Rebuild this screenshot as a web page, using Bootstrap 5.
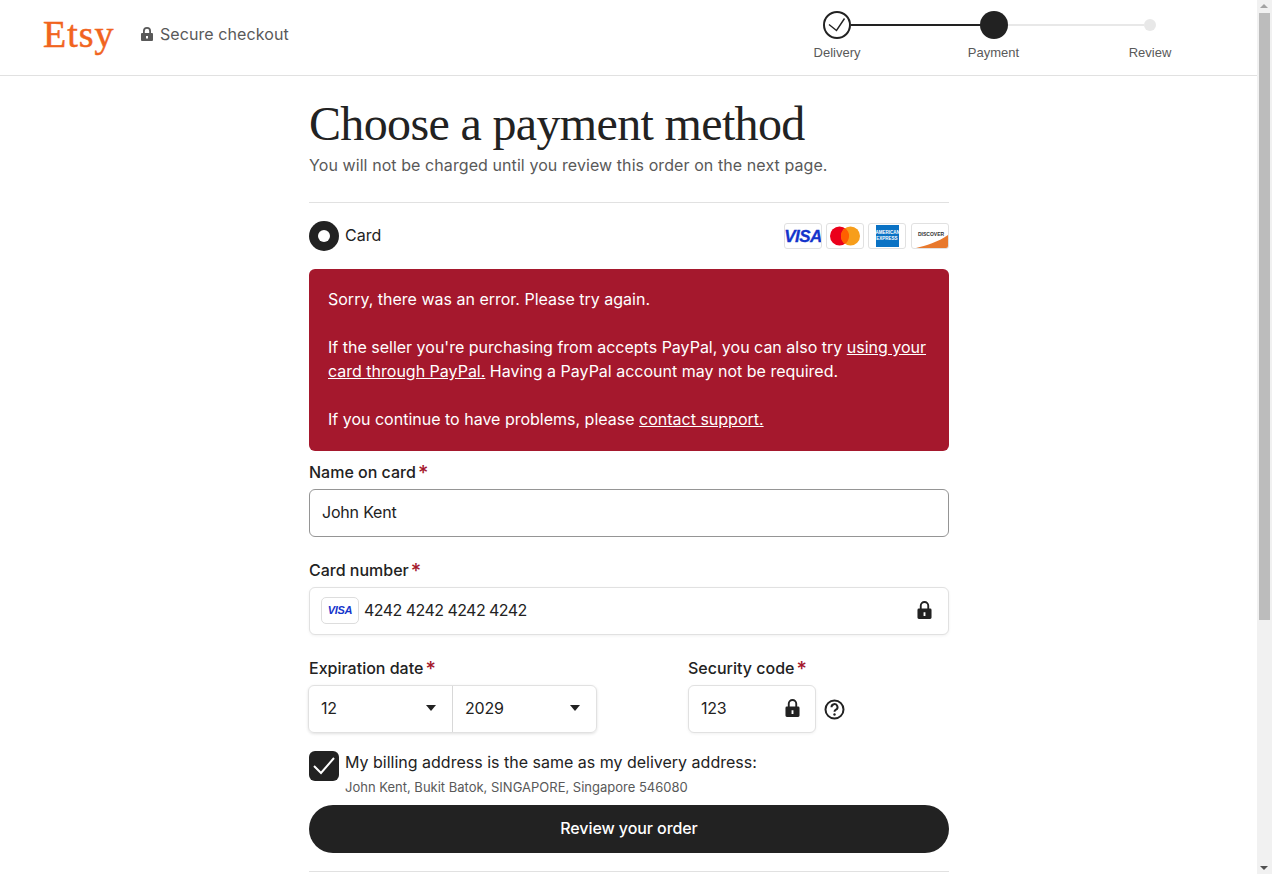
<!DOCTYPE html>
<html lang="en">
<head>
  <meta charset="UTF-8" />
  <meta name="viewport" content="width=device-width, initial-scale=1.0" />
  <title>Etsy - Choose a payment method</title>
  <link href="https://cdn.jsdelivr.net/npm/bootstrap@5.3.3/dist/css/bootstrap.min.css" rel="stylesheet" />
  <style>
    body { font-family: Inter, "Noto Sans", sans-serif; color: #222; font-size: 16px; letter-spacing: 0; }
    .top-head { height: 76px; border-bottom: 1px solid #e1e1e1; padding-left: 43px; margin-right: 14px; }
    .etsy-logo { font-family: "Liberation Serif", serif; font-size: 38px; color: #f1641e; letter-spacing: 1px; line-height: 1; width: 98px; -webkit-text-stroke: 0.5px #f1641e; }
    .head-left { padding-bottom: 8px; }
    .secure-text { color: #595959; font-size: 16px; letter-spacing: 0.08px; }
    .secure-text svg { margin-right: 7px; }
    .stepper { width: 391px; margin-right: 69px; }
    .step-col { width: 78px; height: 60px; font-family: "Liberation Sans", sans-serif; font-size: 13px; color: #595959; }
    .step-dot { height: 28px; display: flex; align-items: center; justify-content: center; margin: 11px 0 4px; }
    .step-line { flex: 1 1 0; height: 2px; margin: 24px -33px 0; background: #222; }
    .step-line.todo { background: #e8e8e8; }
    .step-cur { width: 28px; height: 28px; border-radius: 50%; background: #222; position: relative; }
    .step-next { width: 12px; height: 12px; border-radius: 50%; background: #e8e8e8; position: relative; }
    .step-done { position: relative; background: #fff; border-radius: 50%; }
    .pay-wrap { width: 640px; margin-left: 309px; }
    .pay-title { font-family: "Liberation Serif", serif; font-size: 48px; font-weight: 400; line-height: 52px; letter-spacing: -0.65px; margin: 22px 0 0; }
    .pay-sub { color: #595959; line-height: 24px; letter-spacing: 0.08px; margin: 3px 0 0; padding-bottom: 25px; border-bottom: 1px solid #e1e1e1; }
    .method-row { height: 66px; }
    .card-name { margin-top: -2px; }
    .radio-mark { width: 30px; height: 30px; border-radius: 50%; background: #222; display: flex; align-items: center; justify-content: center; margin-right: 6px; }
    .radio-mark span { width: 12px; height: 12px; background: #fff; border-radius: 50%; }
    .card-logo { width: 38px; height: 26px; border: 1px solid #e1e1e1; border-radius: 3px; background: #fff; overflow: hidden; display: flex; align-items: center; justify-content: center; position: relative; }
    .card-logo:last-child { margin-left: 1px; }
    .visa-text { font-family: "Liberation Sans", sans-serif; font-style: italic; font-weight: 700; color: #1434cb; font-size: 17px; letter-spacing: -0.6px; line-height: 1; -webkit-text-stroke: 0.3px #1434cb; }
    .amex-box { width: 23px; height: 22px; background: #0a72c4; color: #fff; font-family: "Liberation Sans", sans-serif; font-size: 4.5px; line-height: 6px; text-align: center; padding-top: 5px; font-weight: 700; }
    .disc-text { font-family: "Liberation Sans", sans-serif; font-size: 5px; font-weight: 700; color: #333; position: absolute; top: 7px; left: 6px; }
    .err-box { background: #a5182d; color: #fff; border-radius: 6px; padding: 18px 19px; line-height: 24px; height: 182px; margin-bottom: 9px; }
    .err-box p { margin: 0 0 24px; }
    .err-box p:last-child { margin: 0; }
    .err-box a { color: #fff; }
    .field-label { font-weight: 500; line-height: 24px; display: block; margin-bottom: 5px; }
    .field-label i { color: #a5182d; font-style: normal; font-size: 20px; line-height: 0; margin-left: 2px; vertical-align: -2px; }
    .text-field { height: 48px; border: 1px solid #959595; border-radius: 6px; padding: 0 12px 2px; display: flex; align-items: center; background: #fff; margin-bottom: 21px; letter-spacing: -0.2px; }
    .text-field.soft { border-color: #e1e1e1; box-shadow: 0 1px 3px rgba(0,0,0,.06); }
    .card-digits { letter-spacing: -0.55px; }
    .visa-mini { width: 38px; height: 27px; border: 1px solid #ddd; border-radius: 5px; display: flex; align-items: center; justify-content: center; margin-left: -1px; margin-right: 5px; }
    .visa-mini .visa-text { font-size: 11px; letter-spacing: -0.3px; -webkit-text-stroke: 0; }
    .date-group { width: 289px; height: 48px; border: 1px solid #e1e1e1; border-radius: 6px; box-shadow: 0 1px 3px rgba(0,0,0,.12); margin-left: -1px; letter-spacing: -0.2px; }
    .date-part { flex: 1 1 0; padding: 0 16px 2px 12px; }
    .date-part + .date-part { border-left: 1px solid #d8d8d8; }
    .caret-down { width: 0; height: 0; border-left: 5px solid transparent; border-right: 5px solid transparent; border-top: 6px solid #222; }
    .cvc-field { width: 128px; padding-right: 15px; margin-bottom: 0; }
    .date-col { width: 379px; }
    .check-row { margin-top: 18px; }
    .check-mark { width: 30px; height: 30px; background: #222; border-radius: 6px; flex: none; margin-right: 6px; display: flex; align-items: center; justify-content: center; }
    .bill-text { margin-top: -1px; }
    .bill-addr { font-size: 13px; color: #595959; line-height: 18px; margin-top: 4px; }
    .review-btn { height: 48px; border-radius: 24px; background: #222; color: #fff; border: 0; width: 100%; padding: 0 0 2px; font-weight: 500; font-size: 16px; letter-spacing: -0.08px; display: block; margin-top: 9px; }
    .end-rule { border-top: 1px solid #e1e1e1; margin-top: 18px; height: 2px; }
    .fake-scroll { position: fixed; top: 0; right: 0; bottom: 0; width: 15px; background: #f1f1f1; }
    .fake-thumb { position: absolute; top: 13px; left: 2px; width: 11px; height: 607px; background: #bcbcbc; }
    .fake-arrow { position: absolute; left: 3px; width: 0; height: 0; border-left: 4px solid transparent; border-right: 4px solid transparent; }
    .fake-arrow.up { top: 4px; border-bottom: 4px solid #a3a3a3; }
    .fake-arrow.down { bottom: 4px; border-top: 4px solid #505050; }
  </style>
</head>
<body>
  <header class="top-head d-flex align-items-center justify-content-between">
    <div class="head-left d-flex align-items-center">
      <div class="etsy-logo">Etsy</div>
      <div class="secure-text d-flex align-items-center">
        <svg width="12" height="14" viewBox="0 0 12 14" fill="#595959"><path fill-rule="evenodd" d="M6 0a4 4 0 0 0-4 4v2H1a1 1 0 0 0-1 1v6a1 1 0 0 0 1 1h10a1 1 0 0 0 1-1V7a1 1 0 0 0-1-1h-1V4a4 4 0 0 0-4-4zm2.200 6H3.800V4a2.200 2.200 0 0 1 4.400 0zM5 9h2v2.500H5z"/></svg>
        Secure checkout
      </div>
    </div>
    <div class="stepper d-flex text-center align-self-start">
      <div class="step-col">
        <div class="step-dot"><span class="step-done d-flex">
          <svg width="28" height="28" viewBox="0 0 28 28" fill="none"><circle cx="14" cy="14" r="13" stroke="#222" stroke-width="2"/><path d="M6 13.500l7.500 6L21.500 7.500" stroke="#222" stroke-width="1.400"/></svg>
        </span></div>
        Delivery
      </div>
      <div class="step-line"></div>
      <div class="step-col">
        <div class="step-dot"><span class="step-cur"></span></div>
        Payment
      </div>
      <div class="step-line todo"></div>
      <div class="step-col">
        <div class="step-dot"><span class="step-next"></span></div>
        Review
      </div>
    </div>
  </header>

  <main class="pay-wrap">
    <h1 class="pay-title">Choose a payment method</h1>
    <p class="pay-sub">You will not be charged until you review this order on the next page.</p>

    <div class="method-row d-flex align-items-center justify-content-between">
      <div class="d-flex align-items-center"><span class="radio-mark"><span></span></span><span class="card-name">Card</span></div>
      <div class="d-flex gap-1">
        <span class="card-logo"><span class="visa-text">VISA</span></span>
        <span class="card-logo">
          <svg width="32" height="20" viewBox="0 0 32 20"><circle cx="10.500" cy="10" r="9.500" fill="#eb001b"/><circle cx="21.500" cy="10" r="9.500" fill="#f79e1b"/><path d="M16 2.200a9.500 9.500 0 0 1 0 15.600a9.500 9.500 0 0 1 0-15.600z" fill="#ff5f00"/></svg>
        </span>
        <span class="card-logo"><span class="amex-box">AMERICAN EXPRESS</span></span>
        <span class="card-logo">
          <svg class="position-absolute bottom-0 end-0" width="36" height="24" viewBox="0 0 36 24"><path d="M36 11C26 18 14 21.500 4 24h32z" fill="#e8792d"/></svg>
          <span class="disc-text">DISCOVER</span>
        </span>
      </div>
    </div>

    <div class="err-box">
      <p>Sorry, there was an error. Please try again.</p>
      <p>If the seller you're purchasing from accepts PayPal, you can also try <a href="#">using your card through PayPal.</a> Having a PayPal account may not be required.</p>
      <p>If you continue to have problems, please <a href="#">contact support.</a></p>
    </div>

    <label class="field-label">Name on card<i>*</i></label>
    <div class="text-field">John Kent</div>

    <label class="field-label">Card number<i>*</i></label>
    <div class="text-field soft justify-content-between">
      <div class="d-flex align-items-center">
        <span class="visa-mini"><span class="visa-text">VISA</span></span><span class="card-digits">4242 4242 4242 4242</span>
      </div>
      <svg width="15" height="18" viewBox="0 0 16 19" fill="#222" class="me-1"><path fill-rule="evenodd" d="M8 0a5 5 0 0 0-5 5v3H2a1.500 1.500 0 0 0-1.500 1.500v8A1.500 1.500 0 0 0 2 19h12a1.500 1.500 0 0 0 1.500-1.500v-8A1.500 1.500 0 0 0 14 8h-1V5a5 5 0 0 0-5-5zm3 8H5V5a3 3 0 0 1 6 0zM7 12h2v4H7z"/></svg>
    </div>

    <div class="d-flex">
      <div class="date-col">
        <label class="field-label">Expiration date<i>*</i></label>
        <div class="date-group d-flex">
          <div class="date-part d-flex align-items-center justify-content-between">12<span class="caret-down"></span></div>
          <div class="date-part d-flex align-items-center justify-content-between">2029<span class="caret-down"></span></div>
        </div>
      </div>
      <div>
        <label class="field-label">Security code<i>*</i></label>
        <div class="d-flex align-items-center">
          <div class="text-field soft cvc-field justify-content-between">123
            <svg width="15" height="18" viewBox="0 0 16 19" fill="#222"><path fill-rule="evenodd" d="M8 0a5 5 0 0 0-5 5v3H2a1.500 1.500 0 0 0-1.500 1.500v8A1.500 1.500 0 0 0 2 19h12a1.500 1.500 0 0 0 1.500-1.500v-8A1.500 1.500 0 0 0 14 8h-1V5a5 5 0 0 0-5-5zm3 8H5V5a3 3 0 0 1 6 0zM7 12h2v4H7z"/></svg>
          </div>
          <svg class="ms-2" width="21" height="21" viewBox="0 0 21 21" fill="none"><circle cx="10.500" cy="10.500" r="9" stroke="#222" stroke-width="2"/><path d="M7.500 8.200a3 3 0 1 1 4.500 2.500c-1 .6-1.500 1-1.500 2" stroke="#222" stroke-width="2"/><circle cx="10.500" cy="15.500" r="1.200" fill="#222"/></svg>
        </div>
      </div>
    </div>

    <div class="check-row d-flex">
      <span class="check-mark"><svg width="24" height="18" viewBox="0 0 24 18" fill="none"><path d="M2 9l7 7L22 1" stroke="#fff" stroke-width="2"/></svg></span>
      <div class="bill-text">
        <div>My billing address is the same as my delivery address:</div>
        <div class="bill-addr">John Kent, Bukit Batok, SINGAPORE, Singapore 546080</div>
      </div>
    </div>

    <button type="button" class="review-btn">Review your order</button>
    <div class="end-rule"></div>
  </main>

  <div class="fake-scroll">
    <span class="fake-arrow up"></span>
    <span class="fake-thumb"></span>
    <span class="fake-arrow down"></span>
  </div>
</body>
</html>
